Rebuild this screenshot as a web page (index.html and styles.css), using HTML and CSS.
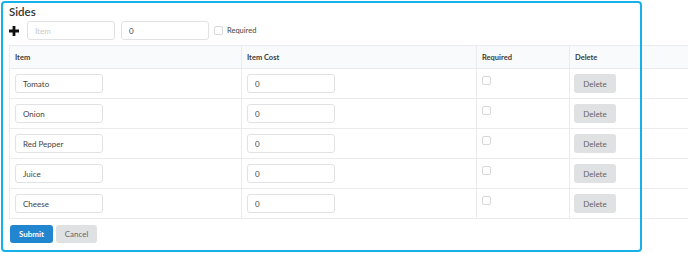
FILE: index.html
```html
<!DOCTYPE html>
<html>
<head>
<meta charset="utf-8">
<link rel="stylesheet" href="styles.css">
</head>
<body>
<div class="panel">
  <div class="title">Sides</div>
  <div class="addrow">
    <svg class="plus" width="10" height="10" viewBox="0 0 10 10"><path d="M3.6 0h2.8v3.6H10v2.8H6.4V10H3.6V6.4H0V3.6h3.6z" fill="#111"/></svg>
    <input class="inp inp-item" placeholder="Item">
    <input class="inp inp-cost" value="0">
    <span class="cb"></span><span class="cblabel">Required</span>
  </div>
  <table class="grid">
    <thead>
      <tr><th class="c1">Item</th><th class="c2">Item Cost</th><th class="c3">Required</th><th class="c4">Delete</th></tr>
    </thead>
    <tbody>
      <tr><td><input class="inp" value="Tomato"></td><td><input class="inp" value="0"></td><td><span class="cb"></span></td><td><button class="del">Delete</button></td></tr>
      <tr><td><input class="inp" value="Onion"></td><td><input class="inp" value="0"></td><td><span class="cb"></span></td><td><button class="del">Delete</button></td></tr>
      <tr><td><input class="inp" value="Red Pepper"></td><td><input class="inp" value="0"></td><td><span class="cb"></span></td><td><button class="del">Delete</button></td></tr>
      <tr><td><input class="inp" value="Juice"></td><td><input class="inp" value="0"></td><td><span class="cb"></span></td><td><button class="del">Delete</button></td></tr>
      <tr><td><input class="inp" value="Cheese"></td><td><input class="inp" value="0"></td><td><span class="cb"></span></td><td><button class="del">Delete</button></td></tr>
    </tbody>
  </table>
  <div class="actions">
    <button class="btn submit">Submit</button>
    <button class="btn cancel">Cancel</button>
  </div>
</div>
</body>
</html>
```
FILE: styles.css
```css
html, body { margin: 0; padding: 0; background: #fff; }
body { font-family: Lato, "Open Sans", sans-serif; color: #333; overflow: hidden; width: 688px; height: 253px; }
.panel {
  margin: 3px 0 0 3px;
  width: 637px;
  height: 247px;
  outline: 2px solid #17b1ea;
  outline-offset: 0;
  border-radius: 2px;
  box-sizing: border-box;
  padding: 2px 0 0 6px;
}
.title { font-size: 11.5px; line-height: 14px; font-weight: 600; color: #333; }
.addrow { display: flex; align-items: center; height: 19px; margin-top: 2px; }
.plus { margin: 0 8px 0 0; }
.inp {
  box-sizing: border-box; height: 19px; width: 88px;
  border: 1px solid #e2e2e4; border-radius: 3px;
  font-family: Lato, sans-serif; font-size: 8px; color: #444;
  padding: 0 7px; background: #fff; outline: none;
}
.inp::placeholder { color: #c8c8c8; }
.inp-cost { margin-left: 6px; }
.cb { display: inline-block; box-sizing: border-box; width: 9px; height: 9px; border: 1px solid #d8d8d8; border-radius: 2px; background: #fff; }
.addrow .cb { margin-left: 5px; }
.cblabel { font-size: 7.5px; margin-left: 4px; color: #444; }
.grid {
  margin-top: 5px;
  border-collapse: collapse;
  width: 681px;
  table-layout: fixed;
  font-size: 7.5px;
}
.grid th, .grid td { border: 1px solid #ebebed; padding: 0 5px; text-align: left; }
.grid thead th { background: #f9fafb; height: 22px; font-weight: 700; color: #3a3a3a; }
.grid tbody td { height: 29px; }
.c1 { width: 221px; }
.c2 { width: 224px; }
.c3 { width: 82px; }
.c4 { padding-left: 4px; }
.grid tbody td:nth-child(4) { padding-left: 4px; }
.grid tbody td:nth-child(3) .cb { vertical-align: 4px; }
.del {
  font-family: Lato, sans-serif; font-size: 8px; color: #666;
  background: #e0e1e2; border: none; border-radius: 3px;
  width: 42px; height: 19px; padding: 0;
}
.actions { display: flex; gap: 3px; margin-top: 6px; padding-left: 1px; }
.btn { font-family: Lato, sans-serif; font-size: 8px; border: none; border-radius: 3px; height: 18px; width: 43px; padding: 0; }
.submit { background: #2185d0; color: #fff; font-weight: 700; }
.cancel { background: #e0e1e2; color: #666; width: 41px; }
```
